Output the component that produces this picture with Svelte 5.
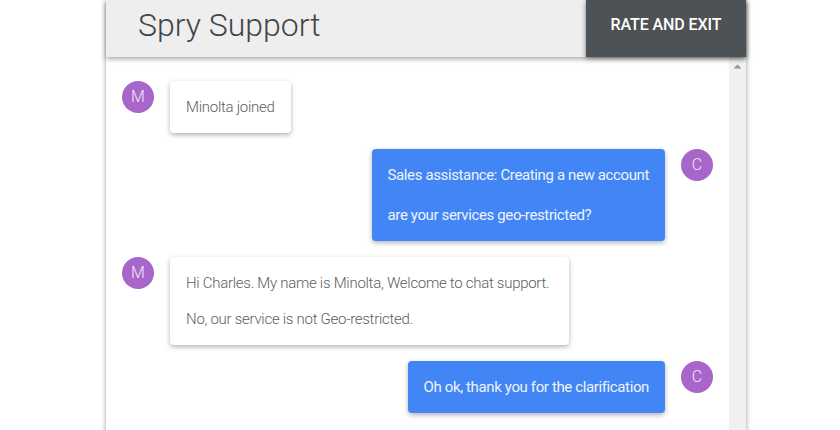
<script>
  const messages = [
    { id: 1, initial: 'M', mine: false, lines: ['Minolta joined'] },
    {
      id: 2,
      initial: 'C',
      mine: true,
      lines: ['Sales assistance: Creating a new account', 'are your services geo-restricted?']
    },
    {
      id: 3,
      initial: 'M',
      mine: false,
      lines: [
        'Hi Charles. My name is Minolta, Welcome to chat support.',
        'No, our service is not Geo-restricted.'
      ]
    },
    { id: 4, initial: 'C', mine: true, lines: ['Oh ok, thank you for the clarification'] }
  ];
</script>

<div class="chat">
  <header>
    <h1>Spry Support</h1>
    <button type="button">RATE AND EXIT</button>
  </header>
  <div class="body">
    <div class="messages">
      {#each messages as m (m.id)}
        <div class="message" class:mine={m.mine}>
          <span class="avatar">{m.initial}</span>
          <div class="bubble">
            {#each m.lines as line}
              <p>{line}</p>
            {/each}
          </div>
        </div>
      {/each}
    </div>
    <div class="scrollbar" aria-hidden="true">
      <svg width="9" height="5" viewBox="0 0 9 5"><path d="M0.5 4.5 L4.5 0.5 L8.5 4.5 Z" /></svg>
    </div>
  </div>
</div>

<style>
  :global(body) {
    margin: 0;
    background: #fff;
    overflow: hidden;
  }
  .chat {
    box-sizing: border-box;
    display: flex;
    flex-direction: column;
    width: 640px;
    height: 450px;
    margin-left: 106px;
    background: #fff;
    box-shadow: 0 1px 5px rgba(0, 0, 0, 0.4);
    font-family: Roboto, sans-serif;
  }
  header {
    display: flex;
    flex: none;
    z-index: 1;
    height: 57px;
    background: #eee;
    box-shadow: 0 2px 5px rgba(0, 0, 0, 0.35);
  }
  h1 {
    flex: 1;
    margin: 0;
    padding-left: 32px;
    font-size: 32px;
    font-weight: 300;
    line-height: 50px;
    color: #424548;
  }
  button {
    width: 160px;
    padding: 0 0 8px;
    border: 0;
    background: #4d5256;
    box-shadow: 0 1px 5px rgba(0, 0, 0, 0.5);
    font-family: inherit;
    font-size: 16px;
    font-weight: 500;
    letter-spacing: -0.08px;
    color: #fff;
  }
  .body {
    display: flex;
    flex: 1;
  }
  .messages {
    display: flex;
    flex: 1;
    flex-direction: column;
    gap: 16px;
    padding: 24px 16px;
  }
  .message {
    display: flex;
    align-items: flex-start;
    gap: 16px;
  }
  .mine {
    flex-direction: row-reverse;
  }
  .avatar {
    width: 32px;
    height: 32px;
    border-radius: 50%;
    background: #a866cb;
    font-size: 16px;
    font-weight: 300;
    line-height: 32px;
    text-align: center;
    color: #f3e6f9;
  }
  .bubble {
    display: flex;
    flex-direction: column;
    gap: 16px;
    padding: 16px;
    border-radius: 4px;
    background: #fff;
    box-shadow: 0 2px 5px rgba(0, 0, 0, 0.3);
    font-size: 15px;
    font-weight: 300;
    letter-spacing: -0.28px;
    line-height: 20px;
    color: #606060;
  }
  .bubble p:nth-last-child(2) {
    padding-right: 4px;
  }
  .mine .bubble {
    gap: 20px;
    background: #4285f4;
    font-weight: 400;
    letter-spacing: -0.375px;
    color: #eef4fe;
  }
  .mine .bubble p {
    padding-right: 0;
  }
  p {
    margin: 0;
    white-space: nowrap;
  }
  .scrollbar {
    display: flex;
    justify-content: center;
    width: 17px;
    padding-top: 7px;
    box-sizing: border-box;
    background: #f0f0f0;
  }
  .scrollbar path {
    fill: #949494;
  }
</style>
